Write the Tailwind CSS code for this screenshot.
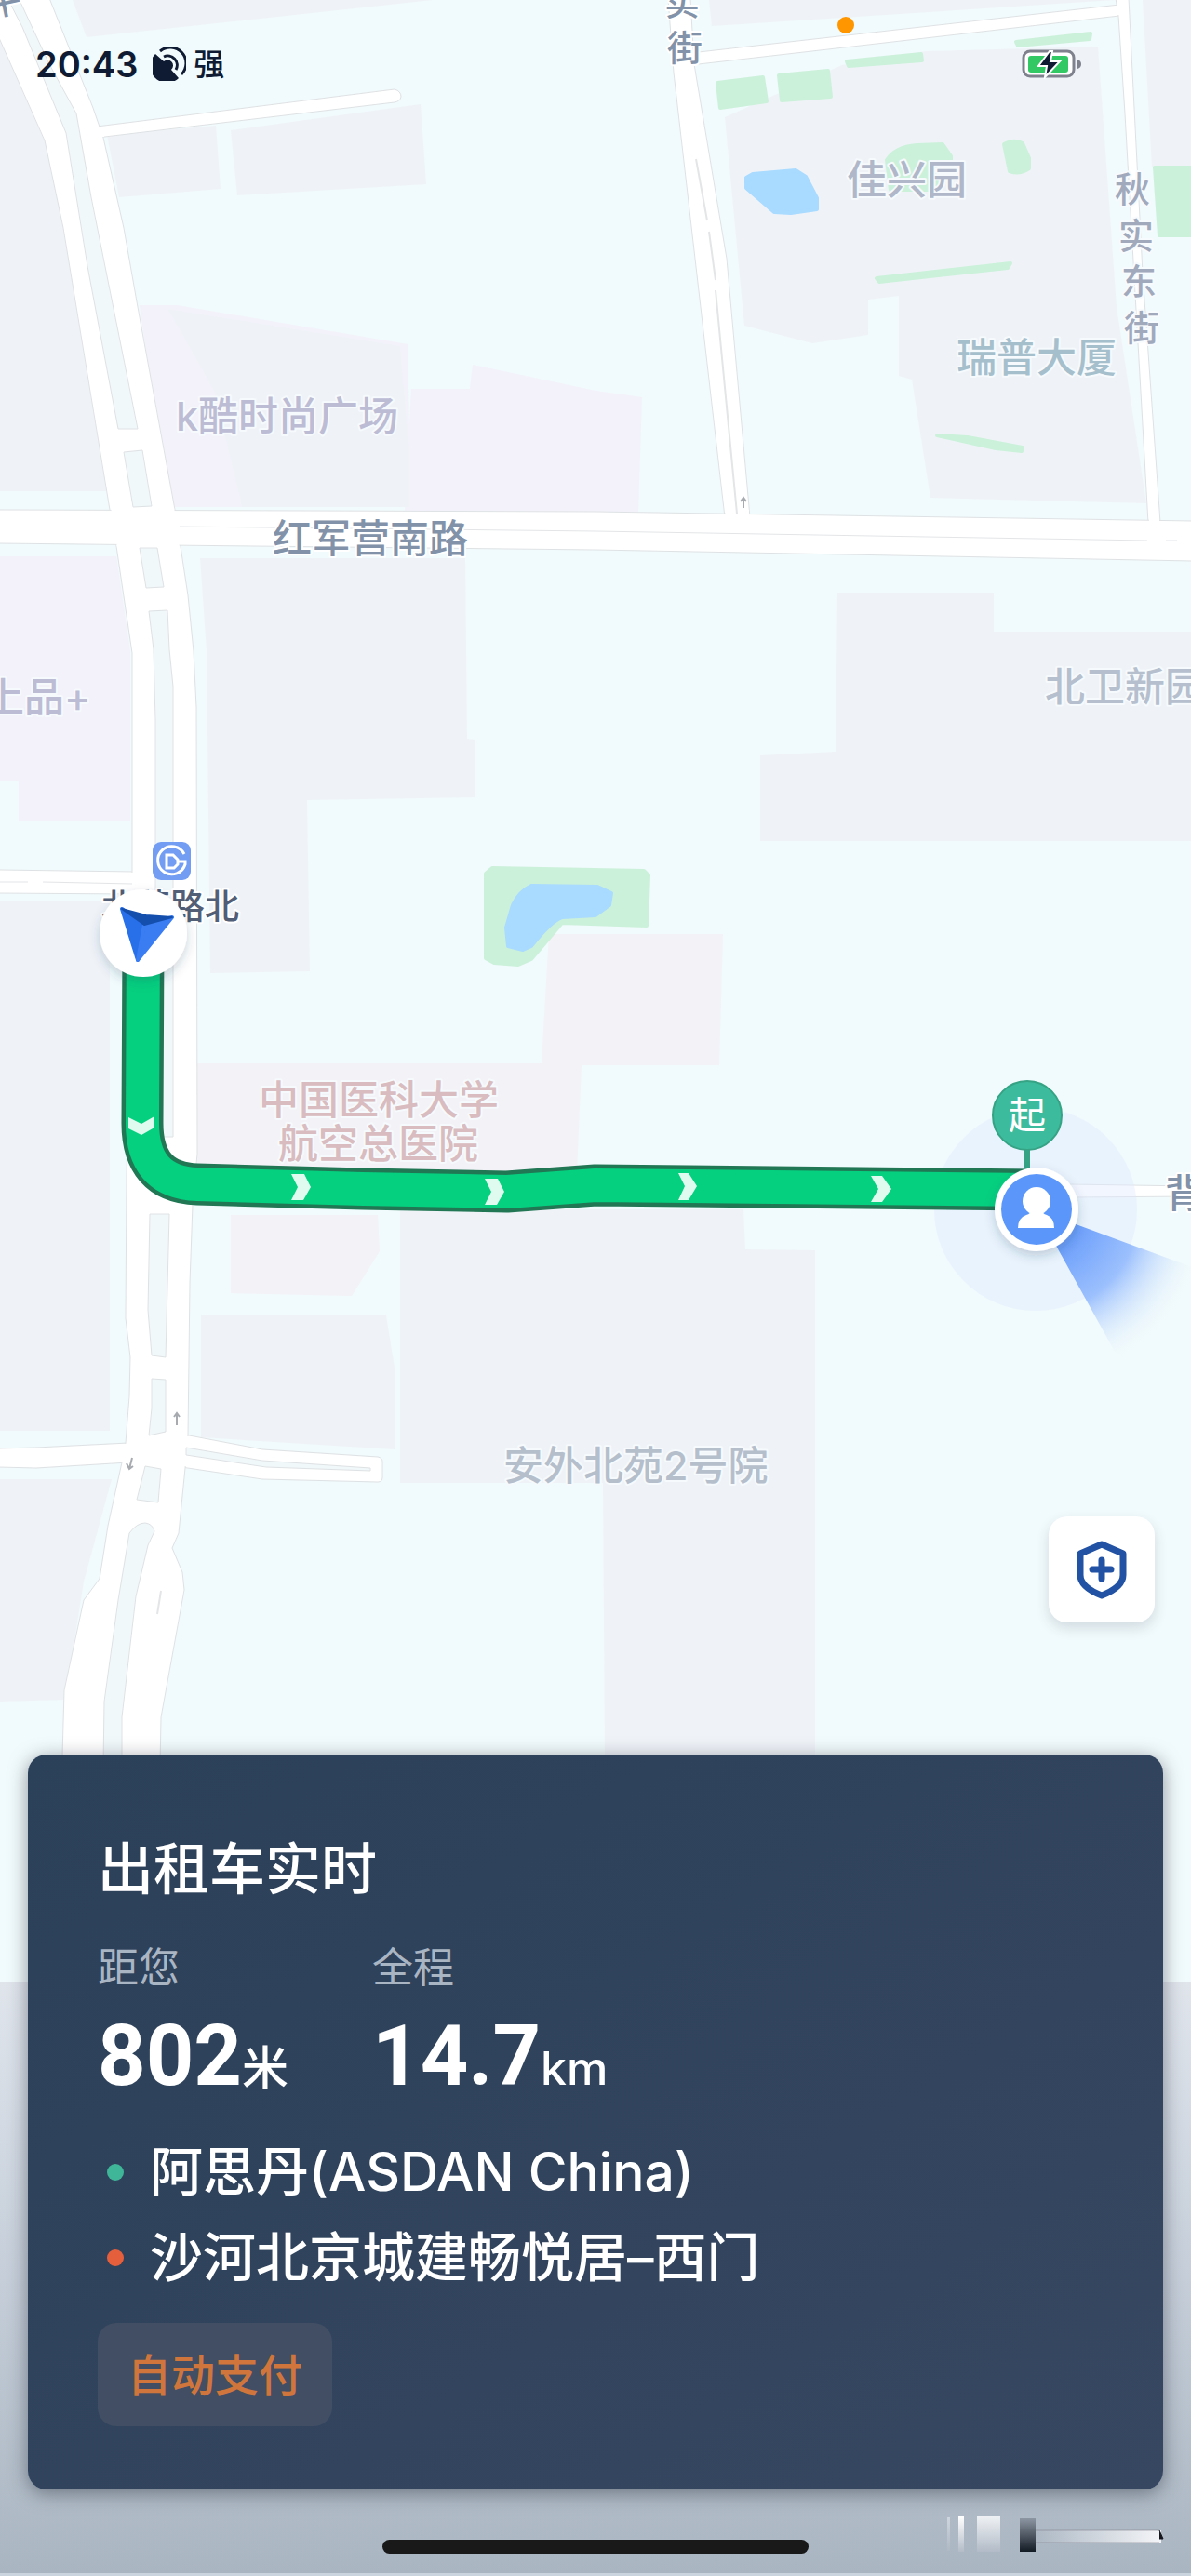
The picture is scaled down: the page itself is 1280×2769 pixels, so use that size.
<!DOCTYPE html>
<html lang="zh-CN">
  <head>
    <meta charset="UTF-8" />
    <meta name="viewport" content="width=device-width, initial-scale=1.0" />
    <title>出租车实时</title>
    <script src="https://cdn.jsdelivr.net/npm/@tailwindcss/browser@4"></script>
  </head>
  <body class="bg-[#f1fafc] font-['Inter','Noto_Sans_CJK_SC',sans-serif]">
    <main class="relative flex min-h-screen flex-col overflow-hidden">
      <!-- Map -->
      <svg
        class="absolute inset-0 h-full w-full"
        viewBox="0 0 1280 2769"
        preserveAspectRatio="xMidYMid slice"
        role="img"
        aria-label="地图"
      >
        <defs>
          <linearGradient id="fade" x1="0" y1="0" x2="0" y2="1">
            <stop offset="0" stop-color="#e0e5ec" />
            <stop offset="0.5" stop-color="#c5ced9" />
            <stop offset="1" stop-color="#a9b5c1" />
          </linearGradient>
          <radialGradient id="cone" gradientUnits="userSpaceOnUse" cx="1113" cy="1300" r="185">
            <stop offset="0.25" stop-color="#6b9efb" />
            <stop offset="0.6" stop-color="#9cc0fd" />
            <stop offset="1" stop-color="#f1fafc" stop-opacity="0" />
          </radialGradient>
          <linearGradient id="smear" x1="0" y1="0" x2="0" y2="1">
            <stop offset="0" stop-color="#8d97a3" />
            <stop offset="1" stop-color="#121a24" />
          </linearGradient>
          <linearGradient id="shine" x1="0" y1="0" x2="0" y2="1">
            <stop offset="0" stop-color="#ffffff" />
            <stop offset="1" stop-color="#b3bcc8" />
          </linearGradient>
          <linearGradient id="streak" x1="0" y1="0" x2="1" y2="0">
            <stop offset="0" stop-color="#f4f5f8" stop-opacity="0" />
            <stop offset="1" stop-color="#f4f5f8" />
          </linearGradient>
          <filter id="soft" x="-30%" y="-30%" width="160%" height="160%">
            <feDropShadow dx="0" dy="5" stdDeviation="6" flood-color="#24405f" flood-opacity="0.22" />
          </filter>
        </defs>
        <rect width="1280" height="2769" fill="#f1fafc" />

        <!-- Blocks -->
        <g fill="#eff3f8">
          <path d="M78 0H465L93 40Z" />
          <path d="M0 30L60 150L118 528H0Z" />
          <path d="M115 145L232 135L237 203L128 212Z" />
          <path d="M248 140L452 112L458 198L255 210Z" />
          <path d="M215 600H500L502 794L511 795V857L330 860L333 1044L226 1046L222 700Z" />
          <path d="M0 968H118V1538H0Z" />
          <path d="M0 1590H120L90 1700L70 1827L0 1829Z" />
          <path d="M430 1300H799L801 1343L876 1344V1886H650L648 1594H430Z" />
          <path d="M216 1414H415L424 1470V1558L216 1545Z" />
          <path d="M900 637H1068V679H1280V904H817V812L898 808Z" />
          <path d="M762 0H1198L765 28Z" />
          <path d="M779 126L905 70L995 55L1180 50L1200 330L1232 541L1000 535L980 408L966 404V318L933 322V360L873 369L800 350Z" />
          <path d="M1228 0H1280V180H1238Z" />
        </g>
        <g fill="#f3f2fb">
          <path d="M150 328H190L438 370L442 545H180Z" />
          <path d="M442 418H505L508 392L640 420L690 427L686 550H435Z" />
          <path d="M0 598H125L140 700V883H20V840H0Z" />
        </g>
        <path fill="#eff3f8" d="M180 332L430 372L440 480V545H260L230 420Z" />
        <g fill="#f3f2f7">
          <path d="M212 1143H582L590 1004H777L773 1145H625L620 1260H212Z" />
          <path d="M248 1306H406L408 1345L378 1393L248 1390Z" />
        </g>

        <!-- Green and water -->
        <g fill="#ccf1da" stroke="#ccf1da" stroke-width="4" stroke-linejoin="round">
          <path d="M771 89L820 83L824 109L774 116Z" />
          <path d="M837 81L890 76L893 104L840 108Z" />
          <path d="M910 66L990 58L991 65L912 71Z" />
          <path d="M1092 45L1172 36L1171 42L1094 49Z" />
          <path d="M953 172Q962 158 985 156L1013 155L1022 168V185L1000 204H957Z" />
          <path d="M1079 155Q1090 149 1099 154L1106 170V181Q1096 188 1085 184Z" />
          <path d="M942 299L1086 283L1083 288L945 303Z" />
          <path d="M1007 468L1040 470L1099 481L1098 485L1070 482Z" />
          <path d="M1241 180H1290V253H1246Z" />
          <path d="M522 939L529 933L692 936L697 941L695 995L604 992L571 1031L557 1037L531 1035L522 1030Z" />
        </g>
        <g fill="#a9daff" stroke="#a9daff" stroke-width="4" stroke-linejoin="round">
          <path d="M802 191L809 187L855 183L866 190L878 213V225L850 229L832 228L802 202Z" />
          <path d="M544 997L551 973Q558 958 571 952L642 953L657 960L655 973L640 984L604 986Q592 990 571 1017L562 1021L546 1017Z" />
        </g>

        <!-- Roads -->
        <g fill="#ffffff" stroke="#dfe2e4" stroke-width="1">
          <path d="M104 136L424 96Q431 98 431 104Q430 109 424 110L104 148Z" />
          <path d="M742 57L1203 5V17L742 70Z" />
          <path d="M1199 -2H1213L1228 294L1247 562H1234L1209 122L1202 17Z" />
          <path d="M718 -2H742L746 69L781 278L806 556H779L724 78Z" />
          <path d="M1150 1273L1280 1275V1286L1150 1287Z" />
          <path d="M-2 935L145 937V961L-2 960Z" />
          <path d="M-2 1557L39 1556L138 1551V1572L39 1578L-2 1577Z" />
          <path d="M198 1542L282 1558L406 1566Q411 1567 411 1571V1588Q411 1593 406 1593L282 1590L195 1577Z" />
          <path d="M-20 -2H53L100 116L111 148L133 245L148 330L188 548L202 640L208 700L211 760L212 1240L207 1295L204 1379L202 1543L199 1578L192 1648L185 1664L196 1690L198 1709L173 1846L172 1900H67V1888L69 1817L90 1720L107 1697L116 1640L131 1572L135 1551L139 1501L140 1459L135 1417L136 1265L142 937V702L125 587L118 548L68 245L48 151Z" />
          <path d="M-2 548L640 550L1282 560V603L640 591L-2 584Z" />
        </g>
        <!-- Cover the outlines where roads cross -->
        <g fill="#ffffff">
          <path d="M119 545H187L193 589H126Z" />
          <path d="M780 548H805V556H780Z" />
          <path d="M1235 556H1246V562H1235Z" />
          <path d="M100 137H112V147H100Z" />
          <path d="M738 58H748V69H738Z" />
          <path d="M1198 6H1206V16H1198Z" />
          <path d="M138 938H148V960H138Z" />
          <path d="M130 1552H142V1571H130Z" />
          <path d="M192 1544H204V1576H192Z" />
        </g>
        <g fill="#f1f8fa" stroke="#dfe2e4" stroke-width="1">
          <path d="M8 -2H20L53 69L82 122L98 212L148 461H127L94 286L71 143L24 29Z" />
          <path d="M133 486L153 484L163 544L143 545Z" />
          <path d="M150 589H169L176 631L157 632Z" />
          <path d="M160 657L180 656L182 698L186 738V1222H167V774L165 698Z" />
          <path d="M161 1305H182L178 1459L163 1457L159 1408Z" />
          <path d="M163 1482L178 1483V1539L160 1543L163 1514Z" />
          <path d="M156 1576L173 1579L170 1615L147 1612Z" />
          <path d="M139 1648Q147 1637 156 1637Q164 1638 166 1646L159 1661L146 1716L131 1846V1900H111L112 1829L127 1720Z" />
          <path d="M200 1556L282 1570L398 1578V1581L286 1577L200 1564Z" />
        </g>
        <g fill="none" stroke="#e3e5e7" stroke-width="2">
          <path d="M193 566L640 571L1233 581M1253 581H1265" stroke-width="1" />
          <path d="M748 171L760 237M762 249L769 301M769 312L792 552" />
          <path d="M0 948H30M46 948L142 950" stroke-width="1" />
          <path d="M173 1710L169 1735" />
        </g>
        <g fill="none" stroke="#a7abb0" stroke-width="2">
          <path d="M799 546V535M796 539L799 535L802 539" />
          <path d="M190 1532V1519M187 1523L190 1519L193 1523" />
          <path d="M142 1567L139 1579M136 1573L139 1579L143 1576" />
        </g>

        <!-- Place names -->
        <g class="text-[43px] font-medium" stroke="#f6fafc" stroke-width="4" stroke-linejoin="round" paint-order="stroke">
          <text x="189" y="463" fill="#bdbcd5">k酷时尚广场</text>
          <text x="-17" y="765" fill="#bdbcd5">上品+</text>
          <text x="910" y="209" fill="#afb7c9">佳兴园</text>
          <text x="1028" y="400" fill="#a6bfcc">瑞普大厦</text>
          <text x="1123" y="754" fill="#b5bfce">北卫新园</text>
          <text x="278" y="1198" fill="#d9bcc0">中国医科大学</text>
          <text x="299" y="1245" fill="#d9bcc0">航空总医院</text>
          <text x="541" y="1591" fill="#b5bfcc">安外北苑2号院</text>
        </g>
        <g class="text-[42px] font-medium" fill="#8292a9" stroke="#ffffff" stroke-width="4" stroke-linejoin="round" paint-order="stroke">
          <text x="293" y="594">红军营南路</text>
          <text x="1252" y="1298">背</text>
        </g>
        <g class="text-[38px] font-medium" fill="#8292a9" stroke="#ffffff" stroke-width="4" stroke-linejoin="round" paint-order="stroke">
          <text x="714" y="16">实</text>
          <text x="717" y="65">街</text>
          <text x="-16" y="16" transform="rotate(-12 0 0)">平</text>
        </g>
        <g class="text-[38px] font-medium" fill="#a1a9bc" stroke="#f8fbfd" stroke-width="4" stroke-linejoin="round" paint-order="stroke">
          <text x="1198" y="217">秋</text>
          <text x="1202" y="267">实</text>
          <text x="1205" y="316">东</text>
          <text x="1208" y="366">街</text>
        </g>

        <!-- Route -->
        <circle cx="1113" cy="1300" r="109" fill="#dfe8ff" fill-opacity="0.4" />
        <g fill="none" stroke-linejoin="round">
          <path d="M154 1010L153 1205Q152 1271 212 1273L390 1278L545 1281L640 1274L1110 1279" stroke="#217654" stroke-width="45" />
          <path d="M154 1010L153 1205Q152 1271 212 1273L390 1278L545 1281L640 1274L1110 1279" stroke="#05d07f" stroke-width="36" />
        </g>
        <g fill="#dffaee">
          <path d="M138 1201L152 1208L166 1200V1212L152 1220L138 1213Z" />
          <path d="M313 1262H327L334 1276L326 1290H313L320 1276Z" />
          <path d="M521 1267H535L542 1281L534 1295H521L528 1281Z" />
          <path d="M729 1261H740L749 1275L740 1290H729L736 1275Z" />
          <path d="M936 1264H948L958 1278L948 1292H936L944 1278Z" />
        </g>

        <!-- Station -->
        <text x="109" y="988" class="text-[37px] font-medium" fill="#515e75" stroke="#ffffff" stroke-width="4" stroke-linejoin="round" paint-order="stroke">北苑路北</text>
        <rect x="164" y="905" width="41" height="41" rx="9" fill="#739df3" />
        <g fill="none" stroke="#ffffff" stroke-width="3">
          <path d="M198 918A15 15 0 1 0 199 929V926H191" />
          <path d="M179 919H186L191 924V929L187 933H179Z" />
        </g>

        <!-- Car -->
        <circle cx="154" cy="1003" r="47" fill="#ffffff" filter="url(#soft)" />
        <g stroke-linejoin="round" stroke-width="4">
          <path d="M131 977L155 994L148 1032Z" fill="#2870ea" stroke="#2870ea" />
          <path d="M185 986L155 994L148 1032Z" fill="#3a7df2" stroke="#3a7df2" />
          <path d="M131 977L155 994L185 986L157 984Z" fill="#154fae" stroke="#154fae" stroke-width="2" />
        </g>

        <!-- Passenger and pick-up point -->
        <path d="M1113 1300L1300 1369V1480L1212 1478L1130 1330Z" fill="url(#cone)" />
        <path d="M1104 1234V1262" stroke="#36a385" stroke-width="6" />
        <circle cx="1104" cy="1199" r="37" fill="#3dbb9d" stroke="#36a385" stroke-width="2" />
        <text x="1104" y="1213" text-anchor="middle" class="text-[40px]" fill="#ffffff">起</text>
        <circle cx="1114" cy="1300" r="45" fill="#ffffff" filter="url(#soft)" />
        <circle cx="1114" cy="1300" r="38" fill="#5b97fa" />
        <circle cx="1114" cy="1291" r="15" fill="#ffffff" />
        <path d="M1108 1300H1120Q1120 1305 1125 1306Q1133 1309 1133 1320H1094Q1094 1309 1103 1306Q1108 1305 1108 1300Z" fill="#ffffff" />

        <!-- Bottom shade -->
        <rect y="2131" width="1280" height="635" fill="url(#fade)" />
        <rect y="2766" width="1280" height="3" fill="#c9d4df" />
        <rect x="1018" y="2706" width="3" height="36" fill="url(#shine)" opacity="0.4" />
        <rect x="1030" y="2705" width="6" height="38" fill="url(#shine)" />
        <rect x="1050" y="2705" width="25" height="38" fill="url(#shine)" opacity="0.8" />
        <rect x="1096" y="2707" width="17" height="36" fill="url(#smear)" />
        <rect x="1113" y="2720" width="135" height="13" fill="url(#streak)" />
        <path d="M1113 2720H1246M1113 2733H1246" stroke="#878391" stroke-opacity="0.6" stroke-width="1" />
        <path d="M1246 2720L1250 2729H1246" fill="#15151c" stroke="#15151c" stroke-width="1" />
      </svg>

      <!-- Status bar -->
      <header class="relative flex h-[138px] items-center justify-between pr-[117px] pl-[38px] text-[#0f1b33]">
        <div class="flex items-center gap-4">
          <time class="text-[38px] leading-none font-semibold">20:43</time>
          <svg class="size-9" viewBox="0 0 36 36" fill="none" aria-hidden="true">
            <path d="M3 7A18 18 0 1 0 28 33L20 24A6 6 0 0 0 12 15Z" fill="#0f1b33" />
            <path d="M8 4A17 17 0 0 1 31 29M12 10A10 10 0 0 1 25 24" stroke="#0f1b33" stroke-width="3" />
          </svg>
          <span class="-ml-2 text-[33px] leading-none font-medium">强</span>
        </div>
        <span class="absolute top-[18px] left-[71%] size-[18px] -translate-x-1/2 rounded-full bg-[#ff9600]"></span>
        <svg class="h-8 w-[65px]" viewBox="0 0 65 32" fill="none" role="img" aria-label="充电中">
          <rect x="2" y="2" width="54" height="27" rx="7" fill="#ffffff" stroke="#7f828d" stroke-width="3" />
          <path d="M60 11Q64 12 64 16Q64 20 60 21Z" fill="#7f828d" />
          <rect x="7" y="7" width="43" height="18" rx="3" fill="#32c863" />
          <path d="M30 2L18 18H27L25 30L41 13H31L33 2Z" fill="#0f1b33" stroke="#ffffff" stroke-width="2" />
        </svg>
      </header>

      <div class="flex-1"></div>

      <!-- Safety button -->
      <button
        type="button"
        aria-label="安全中心"
        class="relative mr-[39px] mb-[142px] flex size-[114px] items-center justify-center self-end rounded-[20px] bg-white shadow-[0_6px_14px_rgba(50,70,90,0.16)]"
      >
        <svg class="h-[64px] w-[56px]" viewBox="0 0 56 64" fill="none" stroke="#2152a3" stroke-width="7" stroke-linecap="round" stroke-linejoin="round" aria-hidden="true">
          <path d="M28 5L51 15V38Q51 51 28 60Q5 51 5 38V15Z" />
          <path d="M28 22V42M18 32H38" />
        </svg>
      </button>

      <!-- Ride card -->
      <section
        class="relative mx-[30px] rounded-[20px] bg-linear-to-br from-[#2b4059] to-[#374761] px-[75px] pt-[88px] pb-[68px] text-white shadow-[0_4px_20px_rgba(40,45,60,0.5)]"
      >
        <h1 class="text-[60px] leading-[70px] font-medium">出租车实时</h1>
        <dl class="mt-[43px] grid grid-cols-[295px_auto]">
          <div>
            <dt class="text-[44px] leading-[56px] text-[#aab5c4]">距您</dt>
            <dd class="mt-5 flex h-24 items-baseline leading-24">
              <span class="font-['Roboto',sans-serif] text-[90px] font-bold">802</span>
              <span class="text-[50px] font-medium">米</span>
            </dd>
          </div>
          <div>
            <dt class="text-[44px] leading-[56px] text-[#aab5c4]">全程</dt>
            <dd class="mt-5 flex h-24 items-baseline leading-24">
              <span class="font-['Roboto',sans-serif] text-[90px] font-bold">14.7</span>
              <span class="text-[50px] font-medium">km</span>
            </dd>
          </div>
        </dl>
        <ul class="mt-9 flex flex-col gap-3 text-[57px] leading-20 font-medium">
          <li class="flex items-center gap-7">
            <span class="ml-[10px] size-[18px] shrink-0 rounded-full bg-[#3fb698]"></span>阿思丹(ASDAN China)
          </li>
          <li class="flex items-center gap-7">
            <span class="ml-[10px] size-[18px] shrink-0 rounded-full bg-[#e65f3c]"></span>沙河北京城建畅悦居–西门
          </li>
        </ul>
        <p class="mt-[30px] inline-block rounded-[20px] bg-[#414e63] px-8 text-[47px] leading-[111px] font-medium text-[#d0763c]">自动支付</p>
      </section>

      <!-- Home indicator -->
      <footer class="relative flex h-[93px] justify-center pt-[54px]">
        <span class="h-[15px] w-[458px] rounded-full bg-[#191919]"></span>
      </footer>
    </main>
  </body>
</html>
